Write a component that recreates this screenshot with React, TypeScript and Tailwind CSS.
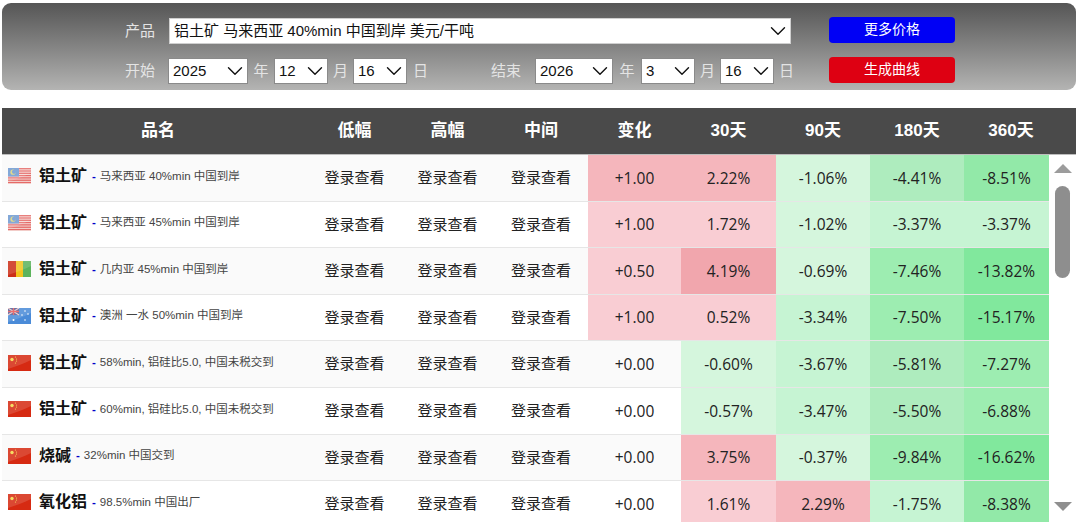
import type { ReactNode } from 'react';
import { ChevronDown } from 'lucide-react';

const CJK = "font-['Liberation_Sans','Noto_Sans_CJK_SC',sans-serif]";

type Flag = 'my' | 'gn' | 'au' | 'cn';

type Row = {
  flag: Flag;
  name: string;
  spec: string;
  change: string;
  changeBg: string;
  cells: [string, string][];
};

const PINK_1 = 'bg-[#f9cdd3]';
const PINK_2 = 'bg-[#f5b6bc]';
const PINK_3 = 'bg-[#f1a6ad]';
const GREEN_1 = 'bg-[#d5f6dd]';
const GREEN_2 = 'bg-[#c6f4d3]';
const GREEN_3 = 'bg-[#aeecbe]';
const GREEN_4 = 'bg-[#9dedb1]';
const GREEN_5 = 'bg-[#81e89d]';

const rows: Row[] = [
  {
    flag: 'my', name: '铝土矿', spec: '马来西亚 40%min 中国到岸', change: '+1.00', changeBg: PINK_2,
    cells: [['2.22%', PINK_2], ['-1.06%', GREEN_1], ['-4.41%', GREEN_3], ['-8.51%', 'bg-[#92e9a8]']],
  },
  {
    flag: 'my', name: '铝土矿', spec: '马来西亚 45%min 中国到岸', change: '+1.00', changeBg: PINK_1,
    cells: [['1.72%', PINK_1], ['-1.02%', GREEN_1], ['-3.37%', GREEN_2], ['-3.37%', GREEN_2]],
  },
  {
    flag: 'gn', name: '铝土矿', spec: '几内亚 45%min 中国到岸', change: '+0.50', changeBg: PINK_1,
    cells: [['4.19%', PINK_3], ['-0.69%', GREEN_1], ['-7.46%', GREEN_4], ['-13.82%', GREEN_5]],
  },
  {
    flag: 'au', name: '铝土矿', spec: '澳洲 一水 50%min 中国到岸', change: '+1.00', changeBg: PINK_1,
    cells: [['0.52%', PINK_1], ['-3.34%', GREEN_2], ['-7.50%', GREEN_4], ['-15.17%', GREEN_5]],
  },
  {
    flag: 'cn', name: '铝土矿', spec: '58%min, 铝硅比5.0, 中国未税交到', change: '+0.00', changeBg: '',
    cells: [['-0.60%', GREEN_1], ['-3.67%', GREEN_2], ['-5.81%', GREEN_3], ['-7.27%', GREEN_4]],
  },
  {
    flag: 'cn', name: '铝土矿', spec: '60%min, 铝硅比5.0, 中国未税交到', change: '+0.00', changeBg: '',
    cells: [['-0.57%', GREEN_1], ['-3.47%', GREEN_2], ['-5.50%', GREEN_3], ['-6.88%', GREEN_4]],
  },
  {
    flag: 'cn', name: '烧碱', spec: '32%min 中国交到', change: '+0.00', changeBg: '',
    cells: [['3.75%', PINK_2], ['-0.37%', GREEN_1], ['-9.84%', GREEN_4], ['-16.62%', GREEN_5]],
  },
  {
    flag: 'cn', name: '氧化铝', spec: '98.5%min 中国出厂', change: '+0.00', changeBg: '',
    cells: [['1.61%', PINK_1], ['2.29%', PINK_2], ['-1.75%', GREEN_2], ['-8.38%', 'bg-[#92e9a8]']],
  },
];

const headers = ['品名', '低幅', '高幅', '中间', '变化', '30天', '90天', '180天', '360天'];

function FlagIcon({ flag }: { flag: Flag }) {
  return (
    <svg width="23" height="16" viewBox="0 0 23 16" className="shrink-0">
      {flag === 'my' && (
        <>
          <rect width="23" height="16" fill="#f6e6e2" />
          {[0, 2.3, 4.6, 6.9, 9.2, 11.5, 13.8].map((y) => (
            <rect key={y} y={y} width="23" height="1.4" fill="#e56a68" />
          ))}
          <rect width="11" height="8.5" fill="#6f9ad2" />
          <circle cx="5" cy="4.2" r="2.6" fill="#dcd37a" />
          <circle cx="6" cy="3.8" r="2.1" fill="#6f9ad2" />
        </>
      )}
      {flag === 'gn' && (
        <>
          <rect width="8" height="16" fill="#cc2f18" />
          <rect x="8" width="7" height="16" fill="#f2c41d" />
          <rect x="15" width="8" height="16" fill="#5cb35c" />
        </>
      )}
      {flag === 'au' && (
        <>
          <rect width="23" height="16" fill="#4a8bd8" />
          <rect width="11" height="7" fill="#4d5f9c" />
          <path d="M0 0L11 7M11 0L0 7" stroke="#f0c8c8" strokeWidth="1.2" />
          <path d="M5.5 0V7M0 3.5H11" stroke="#e5585a" strokeWidth="1.4" />
          <circle cx="5.5" cy="12" r="1" fill="#fff" />
          <circle cx="17" cy="3" r="0.8" fill="#fff" />
          <circle cx="20" cy="6" r="0.8" fill="#fff" />
          <circle cx="14" cy="7" r="0.8" fill="#fff" />
          <circle cx="17" cy="12" r="0.8" fill="#fff" />
        </>
      )}
      {flag === 'cn' && (
        <>
          <rect width="23" height="16" fill="#d62a12" />
          <circle cx="4" cy="4.5" r="1.7" fill="#f4d84a" />
          <circle cx="7.5" cy="2" r="0.6" fill="#f4d84a" />
          <circle cx="8.5" cy="4" r="0.6" fill="#f4d84a" />
          <circle cx="8.5" cy="6" r="0.6" fill="#f4d84a" />
          <circle cx="7.5" cy="8" r="0.6" fill="#f4d84a" />
        </>
      )}
      <path d="M0 0H23V5C15 9 8 11 0 14Z" fill="#fff" opacity="0.14" />
    </svg>
  );
}

function Picker({ value, className, borderClass = 'border-[#8a8a8a]' }: { value: string; className: string; borderClass?: string }) {
  return (
    <div className={`relative h-[26px] shrink-0 ${className}`}>
      <select
        defaultValue={value}
        className={`appearance-none w-full h-full bg-white border ${borderClass} text-[15px] text-[#111] pl-[4px] ${CJK}`}
      >
        <option>{value}</option>
      </select>
      <ChevronDown size={26} strokeWidth={1.3} className="absolute right-0 top-0 pointer-events-none text-[#111]" />
    </div>
  );
}

function Unit({ children, className = '' }: { children: ReactNode; className?: string }) {
  return <span className={`text-[15px] text-[#e4e4e4] shrink-0 ${className}`}>{children}</span>;
}

function ActionButton({ label, className }: { label: string; className: string }) {
  return (
    <button className={`ml-[38px] w-[126px] h-[26px] rounded-[4px] text-[14px] text-white leading-none pb-[2px] shrink-0 -translate-y-px ${className}`}>
      {label}
    </button>
  );
}

function Filters() {
  return (
    <div className="h-[87px] rounded-[9px] bg-gradient-to-b from-[#565656] to-[#b4b4b3] pt-[15px] pl-[123px]">
      <div className="flex items-center h-[26px]">
        <Unit className="w-[44px]">产品</Unit>
        <Picker value="铝土矿 马来西亚 40%min 中国到岸 美元/干吨" className="w-[622px]" borderClass="border-[#cfcfcf]" />
        <ActionButton label="更多价格" className="bg-[#0000f5]" />
      </div>
      <div className="flex items-center h-[26px] mt-[14px]">
        <Unit className="w-[43px]">开始</Unit>
        <Picker value="2025" className="w-[80px]" />
        <Unit className="w-[26px] text-center">年</Unit>
        <Picker value="12" className="w-[54px]" />
        <Unit className="w-[25px] text-center">月</Unit>
        <Picker value="16" className="w-[54px]" />
        <Unit className="w-[84px] pl-[6px]">日</Unit>
        <Unit className="w-[44px]">结束</Unit>
        <Picker value="2026" className="w-[78px]" />
        <Unit className="w-[28px] text-center">年</Unit>
        <Picker value="3" className="w-[54px]" />
        <Unit className="w-[25px] text-center">月</Unit>
        <Picker value="16" className="w-[54px]" />
        <Unit className="w-[17px] pl-[5px]">日</Unit>
        <ActionButton label="生成曲线" className="bg-[#de0012]" />
      </div>
    </div>
  );
}

function Scrollbar() {
  return (
    <div className="w-[27px] flex flex-col items-center">
      <div className="mt-[9px] w-0 h-0 border-x-[9px] border-x-transparent border-b-[9px] border-b-[#9c9c9c]" />
      <div className="mt-[13px] w-[15px] h-[92px] rounded-full bg-[#8e8e8e]" />
      <div className="mt-[224px] w-0 h-0 border-x-[9px] border-x-transparent border-t-[9px] border-t-[#8f8f8f]" />
    </div>
  );
}

function PriceRow({ row, index }: { row: Row; index: number }) {
  return (
    <div
      className={`grid grid-cols-[306px_93px_93px_94px_93px_95px_94px_94px_85px] h-[46.6px] items-stretch border-b border-[#e6e6e6] text-[15px] text-[#222] ${
        index % 2 === 0 ? 'bg-[#fafafa]' : 'bg-white'
      }`}
    >
      <div className="flex items-center pl-[6px] pb-[3px] overflow-hidden whitespace-nowrap">
        <FlagIcon flag={row.flag} />
        <span className="ml-[8px] text-[16px] font-bold text-[#111]">{row.name}</span>
        <span className="ml-[5px] text-[11.5px] font-bold text-[#0000c8]">-</span>
        <span className="ml-[4px] text-[11.5px] text-[#444]">{row.spec}</span>
      </div>
      {[0, 1, 2].map((i) => (
        <div key={i} className="flex items-center justify-center pt-[1px]">
          登录查看
        </div>
      ))}
      <div className={`flex items-center justify-center pt-[1px] font-['Open_Sans',sans-serif] text-[15.5px] ${row.changeBg}`}>{row.change}</div>
      {row.cells.map(([text, bg]) => (
        <div key={text + bg} className={`flex items-center justify-center pt-[1px] font-['Open_Sans',sans-serif] text-[15.5px] ${bg}`}>
          {text}
        </div>
      ))}
    </div>
  );
}

export default function App() {
  return (
    <div className={`w-[1080px] h-[527px] overflow-hidden bg-white pt-[3px] pl-[2px] pr-[4px] ${CJK}`}>
      <Filters />
      <div className="mt-[18px] h-[47px] pr-[18px] grid grid-cols-[306px_93px_93px_94px_93px_95px_94px_94px_94px] items-center bg-[#4a4a4a] border-b border-[#bdbdbd] text-[17px] font-bold text-white pb-[1px]">
        {headers.map((h, i) => (
          <div key={h} className={i === 0 ? 'text-center pl-[6px]' : 'text-center'}>
            {h}
          </div>
        ))}
      </div>
      <div className="flex h-[367px] overflow-hidden">
        <div className="w-[1047px]">
          {rows.map((row, i) => (
            <PriceRow key={row.spec} row={row} index={i} />
          ))}
        </div>
        <Scrollbar />
      </div>
    </div>
  );
}
